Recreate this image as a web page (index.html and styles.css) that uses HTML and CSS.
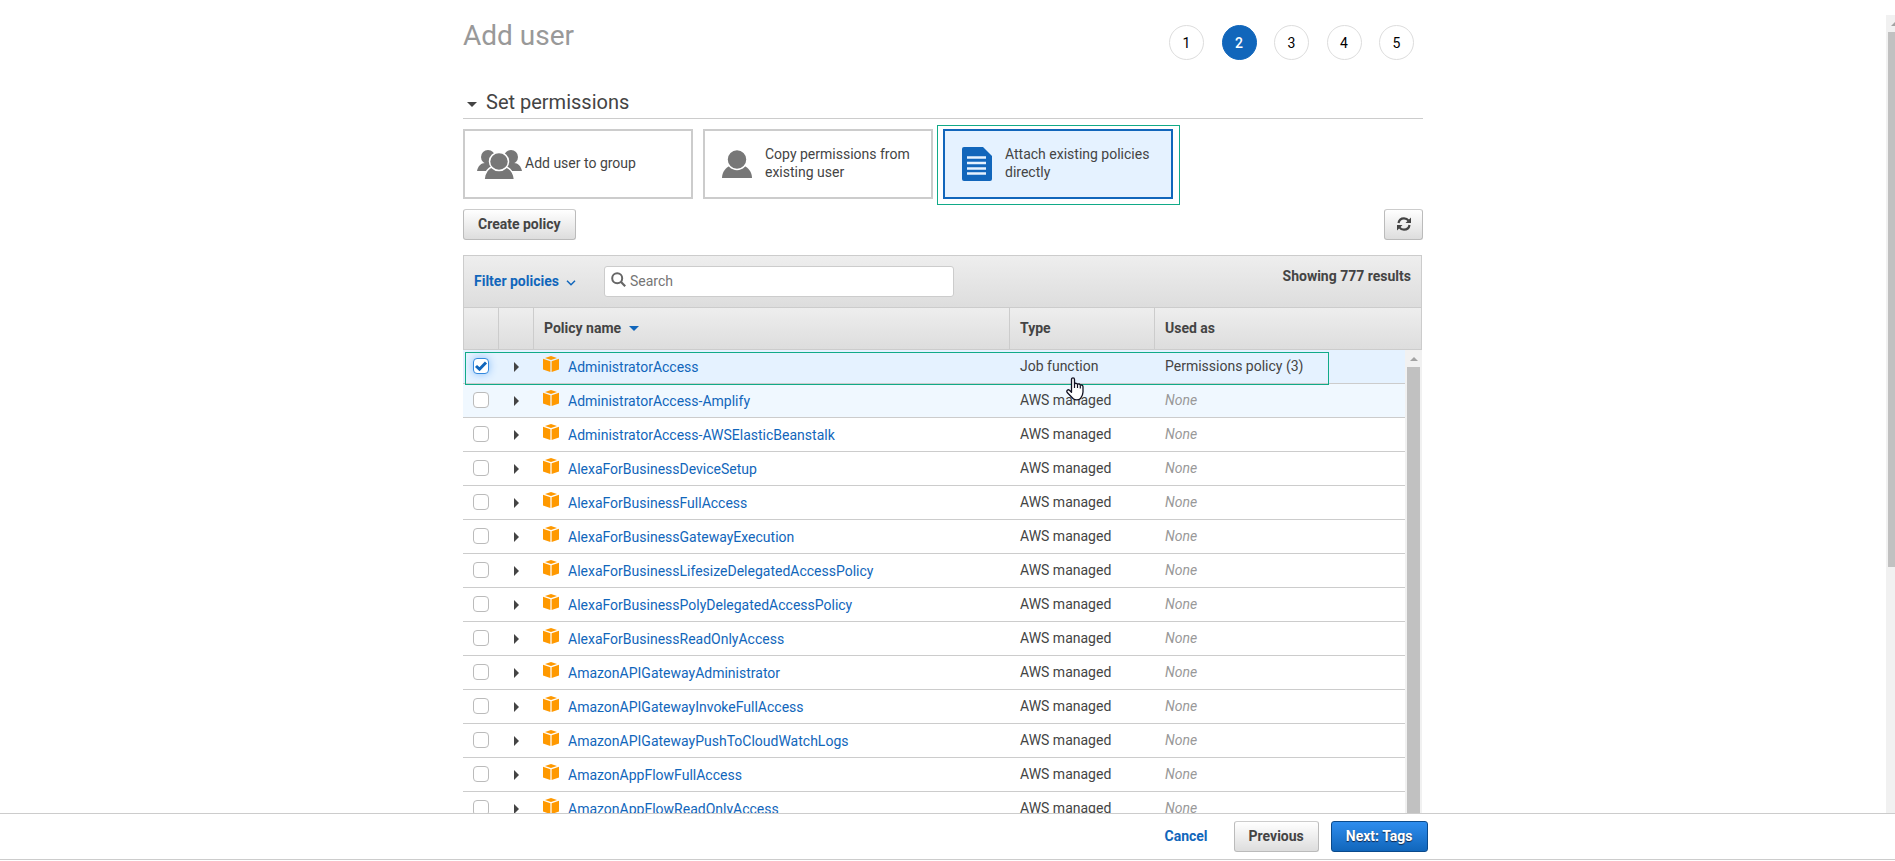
FILE: index.html
```html
<!DOCTYPE html>
<html lang="en">
<head>
  <meta charset="UTF-8">
  <meta name="viewport" content="width=device-width, initial-scale=1.0">
  <title>Add user</title>
  <link rel="stylesheet" href="styles.css">
</head>
<body>
  <!-- Shared icons -->
  <svg class="sprite" aria-hidden="true">
    <symbol id="cube" viewBox="0 0 16 16">
      <path d="M8 0l6 1.9-6 2-6-2z"/>
      <path d="M0 2.8l7.4 2.5V16L0 13.6z"/>
      <path d="M16 2.8L8.6 5.3V16l7.4-2.4z"/>
    </symbol>
  </svg>

  <div class="page">
    <main class="content">
      <header class="top">
        <h1>Add user</h1>
        <ol class="steps">
          <li>1</li>
          <li class="current">2</li>
          <li>3</li>
          <li>4</li>
          <li>5</li>
        </ol>
      </header>

      <h2><span class="caret-down"></span>Set permissions</h2>

      <div class="tiles">
        <button class="tile group">
          <svg class="icon-group" viewBox="0 0 45 29">
            <g fill="#777">
              <circle cx="11" cy="7" r="7"/>
              <circle cx="34" cy="7" r="7"/>
              <path d="M0 21c1-5 4-8 8-8h9v8zM45 21c-1-5-4-8-8-8h-9v8z"/>
            </g>
            <g fill="#777" stroke="#fff" stroke-width="1.5">
              <path d="M7 30c.5-7 4-12 9-13.500h12c5 1.500 9 6.500 9.500 13.500z"/>
              <ellipse cx="22" cy="11.500" rx="9.500" ry="9"/>
            </g>
          </svg>
          <span>Add user to group</span>
        </button>
        <button class="tile">
          <svg class="icon-user" viewBox="0 0 30 28">
            <g fill="#777" stroke="#fff" stroke-width="1.5">
              <path stroke="none" d="M0 28c0-6 4-11 8-12h14c4 1 8 6 8 12z"/>
              <ellipse cx="15" cy="9.500" rx="10" ry="10"/>
            </g>
          </svg>
          <span>Copy permissions from existing user</span>
        </button>
        <div class="marked">
          <button class="tile selected">
            <svg class="icon-doc" viewBox="0 0 30 34">
              <path fill="#1166bb" d="M2 0h19l9 9v23a2 2 0 0 1-2 2H2a2 2 0 0 1-2-2V2a2 2 0 0 1 2-2z"/>
              <path stroke="#e5f2ff" stroke-width="2.5" d="M5 10.500h19M5 16h19M5 21.500h19M5 26.500h19"/>
            </svg>
            <span>Attach existing policies directly</span>
          </button>
        </div>
      </div>

      <div class="actions">
        <button class="btn">Create policy</button>
        <button class="btn refresh" aria-label="Refresh">
          <svg viewBox="0 0 14 14">
            <path fill="none" stroke="#444" stroke-width="2.2" d="M1.500 6C2 3 4.200 1.300 7 1.300c2 0 3.500.8 4.600 2.300M12.500 8c-.5 3-2.700 4.700-5.500 4.700-2 0-3.500-.8-4.600-2.300"/>
            <path fill="#444" d="M14 .5V6H8.500zM0 13.500V8h5.500z"/>
          </svg>
        </button>
      </div>

      <section class="policies">
        <div class="filter">
          <button class="filter-link">Filter policies
            <svg viewBox="0 0 10 6"><path fill="none" stroke="#1166bb" stroke-width="1.5" d="M1 .8l4 4 4-4"/></svg>
          </button>
          <label class="search">
            <svg viewBox="0 0 15 15">
              <circle cx="6.200" cy="6.200" r="5" fill="none" stroke="#666" stroke-width="2"/>
              <path stroke="#666" stroke-width="2.2" d="M9.800 9.800l4.400 4.400"/>
            </svg>
            <input type="text" placeholder="Search" aria-label="Search">
          </label>
          <span class="results">Showing 777 results</span>
        </div>

        <table class="head">
          <tr>
            <th class="col-check"></th>
            <th class="col-open"></th>
            <th class="col-name">Policy name <span class="sort"></span></th>
            <th class="col-type">Type</th>
            <th>Used as</th>
          </tr>
        </table>

        <div class="list">
          <table class="rows">
            <tbody id="rows"></tbody>
          </table>
          <div class="scrollbar"><span class="arrow"></span><span class="thumb"></span></div>
          <div class="row-mark"></div>
          <svg class="pointer" viewBox="0 0 18 24">
            <path fill="#fff" stroke="#112" stroke-width="1.3" stroke-linejoin="round" d="M5.500 13V2.500c0-2.200 3-2.200 3 0V7c.8-1.200 2.700-.9 3 .5 1-1 2.600-.6 2.800.8 1.200-.8 2.700 0 2.700 1.500V15c0 3-1.500 5-2.500 6.500-2 1.800-5.500 1.800-7.500 0L1.200 15.500C0 13.500 2 12 3.500 13.200l2 2z"/>
            <path stroke="#112" stroke-width="1.2" d="M8.500 7v4M11.500 8v3M14.300 9v2.500"/>
          </svg>
        </div>
      </section>
    </main>
    <div class="scrollbar page-bar"><span class="arrow"></span><span class="thumb"></span></div>
  </div>

  <footer>
    <div class="footer-inner">
      <a href="#">Cancel</a>
      <button class="btn">Previous</button>
      <button class="btn primary">Next: Tags</button>
    </div>
  </footer>

  <script>
    const names = [
      'AdministratorAccess',
      'AdministratorAccess-Amplify',
      'AdministratorAccess-AWSElasticBeanstalk',
      'AlexaForBusinessDeviceSetup',
      'AlexaForBusinessFullAccess',
      'AlexaForBusinessGatewayExecution',
      'AlexaForBusinessLifesizeDelegatedAccessPolicy',
      'AlexaForBusinessPolyDelegatedAccessPolicy',
      'AlexaForBusinessReadOnlyAccess',
      'AmazonAPIGatewayAdministrator',
      'AmazonAPIGatewayInvokeFullAccess',
      'AmazonAPIGatewayPushToCloudWatchLogs',
      'AmazonAppFlowFullAccess',
      'AmazonAppFlowReadOnlyAccess'
    ];

    // The first policy is the attached one, the second is hovered
    document.getElementById('rows').innerHTML = names.map((name, i) => `
      <tr class="${['checked', 'hover'][i] || ''}">
        <td class="col-check"><input type="checkbox" aria-label="${name}" ${i === 0 ? 'checked' : ''}></td>
        <td class="col-open"><span class="caret-right"></span></td>
        <td class="col-name"><div class="policy"><svg><use href="#cube"/></svg><a href="#">${name}</a></div></td>
        <td class="col-type">${i === 0 ? 'Job function' : 'AWS managed'}</td>
        <td>${i === 0 ? 'Permissions policy (3)' : '<em>None</em>'}</td>
      </tr>`).join('');
  </script>
</body>
</html>
```
FILE: styles.css
```css
* {
  box-sizing: border-box;
}
body {
  display: flex;
  flex-direction: column;
  height: 100vh;
  margin: 0;
  overflow: hidden;
  font-family: Roboto, Arial, sans-serif;
  font-size: 14px;
  line-height: 18px;
  color: #444;
  background: #fff;
}
button, input {
  font: inherit;
  color: inherit;
}
button {
  cursor: pointer;
}
a {
  color: #1166bb;
  text-decoration: none;
}
.sprite {
  display: none;
}

.page {
  flex: 1;
  min-height: 0;
  display: flex;
  overflow: hidden;
}
.content {
  width: 960px;
  margin: 0 auto;
  padding-top: 15px;
}

/* Title and wizard steps */
.top {
  display: flex;
  justify-content: space-between;
  height: 70px;
}
h1 {
  margin: 0;
  padding-top: 5px;
  font-size: 28px;
  line-height: 32px;
  font-weight: 400;
  color: #999;
}
.steps {
  display: flex;
  justify-content: space-between;
  width: 245px;
  margin: 10px 9px 0 0;
  padding: 0;
  list-style: none;
}
.steps li {
  width: 35px;
  height: 35px;
  border: 1px solid #ddd;
  border-radius: 50%;
  text-align: center;
  line-height: 34px;
  color: #000;
}
.steps .current {
  background: #1166bb;
  border-color: #1166bb;
  color: #fff;
  font-weight: 500;
}
h2 {
  display: flex;
  align-items: center;
  gap: 9px;
  height: 34px;
  margin: 0 0 10px;
  padding-left: 4px;
  border-bottom: 1px solid #ccc;
  font-size: 20px;
  line-height: 24px;
  font-weight: 400;
}
.caret-down, .sort {
  border: 5px solid transparent;
  border-top-color: #444;
  border-bottom: 0;
}
.caret-down {
  margin-top: 5px;
}

/* Permission choices */
.tiles {
  display: flex;
  gap: 10px;
}
.tile {
  display: flex;
  align-items: center;
  gap: 13px;
  width: 230px;
  height: 70px;
  padding: 0 12px 0 17px;
  border: 2px solid #ccc;
  background: #fff;
  text-align: left;
}
.tile.group {
  gap: 3px;
  padding-left: 12px;
}
.tile span {
  padding-bottom: 2px;
}
.tile.selected {
  border-color: #1166bb;
  background: #e5f2ff;
}
.icon-group {
  flex: none;
  width: 45px;
  height: 29px;
}
.icon-user {
  flex: none;
  width: 30px;
  height: 28px;
}
.icon-doc {
  flex: none;
  width: 30px;
  height: 34px;
}
.marked {
  position: relative;
}
.marked::after {
  content: "";
  position: absolute;
  inset: -4px -7px -6px -6px;
  border: 1px solid #11aa88;
  pointer-events: none;
}

/* Buttons */
.actions {
  display: flex;
  justify-content: space-between;
  margin: 10px 0 15px;
}
.btn {
  height: 31px;
  padding: 0 14px 2px;
  border: 1px solid #bbb;
  border-top-color: #ccc;
  border-radius: 3px;
  background: linear-gradient(#fff, #ddd);
  font-weight: 700;
}
.refresh {
  display: flex;
  align-items: center;
  width: 39px;
  padding: 0 12px 2px;
}
.refresh svg {
  flex: none;
  width: 14px;
  height: 14px;
}
.btn.primary {
  border-color: #0a4a8c;
  background: linear-gradient(#2e8dee, #1166bb);
  color: #fff;
  text-shadow: 0 1px 1px #124;
}

/* Policy list */
.policies {
  margin-right: 1px;
}
.filter {
  display: flex;
  align-items: center;
  height: 53px;
  padding: 0 10px;
  border: 1px solid #ccc;
  background: linear-gradient(#eee, #ddd);
}
.filter-link {
  width: 130px;
  padding: 0 0 2px;
  border: 0;
  background: none;
  text-align: left;
  font-weight: 700;
  color: #1166bb;
}
.filter-link svg {
  width: 10px;
  height: 6px;
  margin-left: 4px;
}
.search {
  display: flex;
  align-items: center;
  gap: 4px;
  width: 350px;
  height: 31px;
  padding: 0 6px 2px;
  border: 1px solid #ccc;
  border-radius: 3px;
  background: #fff;
}
.search svg {
  width: 15px;
  height: 15px;
  margin-bottom: 2px;
}
.search input {
  flex: 1;
  border: 0;
  padding: 0;
  outline: 0;
}
.search input::placeholder {
  color: #757575;
}
.results {
  margin: 0 0 11px auto;
  font-weight: 700;
}
table {
  width: 100%;
  table-layout: fixed;
  border-collapse: separate;
  border-spacing: 0;
}
th, td {
  padding: 0 10px 2px;
  text-align: left;
}
.head {
  height: 42px;
  border: 1px solid #ccc;
  border-top: 0;
  background: linear-gradient(#eee, #ddd);
}
.head th + th {
  border-left: 1px solid #ccc;
}
.col-check {
  width: 35px;
}
.head .col-check {
  width: 34px;
}
.col-open {
  width: 35px;
}
.col-name {
  width: 476px;
}
.col-type {
  width: 145px;
}
.sort {
  display: inline-block;
  margin: 0 0 2px 4px;
  border-top-color: #1166bb;
}
.list {
  position: relative;
  display: flex;
}
.rows {
  flex: 1;
}
.rows td {
  height: 34px;
  padding-left: 11px;
  border-bottom: 1px solid #ccc;
}
.rows .col-check {
  padding: 0 0 2px 10px;
}
.rows .col-open {
  padding: 0 0 0 16px;
}
.rows .col-name {
  padding-left: 10px;
}
.rows .checked {
  background: #e5f2ff;
}
.rows .hover {
  background: #f0f8ff;
}
.rows em {
  color: #999;
}
.rows input {
  appearance: none;
  display: block;
  width: 16px;
  height: 16px;
  margin: 0;
  border: 1px solid #bbb;
  border-radius: 4px;
  background: #fff;
}
.rows input:checked {
  border-color: #3388dd;
  background: #fff url("data:image/svg+xml,%3Csvg xmlns='http://www.w3.org/2000/svg' viewBox='0 0 14 14'%3E%3Cpath fill='none' stroke='%231166bb' stroke-width='3' d='M2 7l3.500 3.200 6.500-6.700'/%3E%3C/svg%3E");
  box-shadow: 0 0 8px #8cc0f8;
}
.caret-right {
  display: block;
  width: 0;
  border: 5px solid transparent;
  border-left-color: #444;
  border-right: 0;
}
.policy {
  display: flex;
  align-items: center;
  gap: 9px;
}
.policy svg {
  width: 16px;
  height: 16px;
  margin-bottom: 4px;
  fill: #ff9900;
}
.policy a {
  padding-top: 2px;
}

/* Scroll bars */
.scrollbar {
  display: flex;
  flex-direction: column;
  flex: none;
  align-items: center;
  width: 17px;
  background: #f1f1f1;
}
.arrow {
  margin: 7px 0 6px;
  border: 4px solid transparent;
  border-top: 0;
  border-bottom-color: #a3a3a3;
}
.thumb {
  flex: 1;
  width: 13px;
  background: #c1c1c1;
}
.page-bar {
  width: 9px;
  margin-top: 15px;
  align-items: flex-start;
  padding-left: 2px;
  overflow: hidden;
}
.page-bar .arrow {
  margin-left: 3px;
}
.page-bar .thumb {
  flex: 0 0 67%;
}

/* Outline of the chosen policy and the mouse pointer over it */
.row-mark {
  position: absolute;
  top: 2px;
  left: 2px;
  width: 864px;
  height: 33px;
  border: 1px solid #11aa88;
  pointer-events: none;
}
.pointer {
  position: absolute;
  top: 27px;
  left: 603px;
  width: 18px;
  height: 24px;
}

footer {
  flex: none;
  height: 47px;
  margin-bottom: 1px;
  border: 1px solid #ccc;
  border-width: 1px 0;
}
.footer-inner {
  display: flex;
  justify-content: flex-end;
  align-items: center;
  gap: 12px;
  width: 960px;
  height: 100%;
  margin: 0 auto;
}
.footer-inner a {
  margin-right: 14px;
  padding-bottom: 2px;
  font-weight: 700;
}
```
